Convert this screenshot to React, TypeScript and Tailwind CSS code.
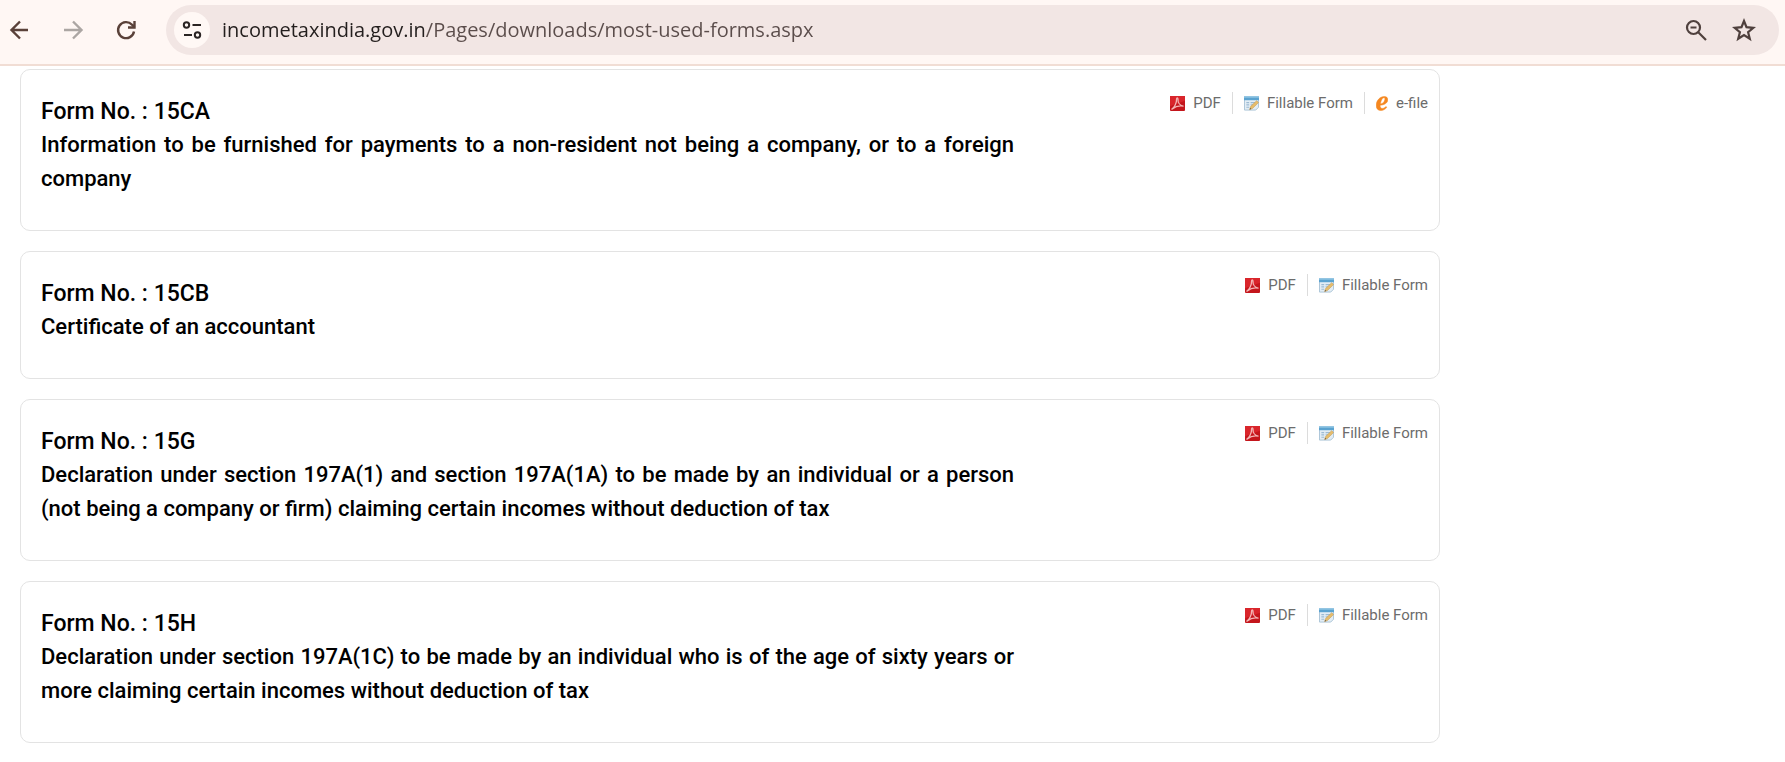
import { ReactNode } from 'react';

type LinkKind = 'pdf' | 'fillable' | 'efile';

interface FormEntry {
  no: string;
  title: string;
  links: LinkKind[];
}

const forms: FormEntry[] = [
  {
    no: '15CA',
    title:
      'Information to be furnished for payments to a non-resident not being a company, or to a foreign company',
    links: ['pdf', 'fillable', 'efile'],
  },
  { no: '15CB', title: 'Certificate of an accountant', links: ['pdf', 'fillable'] },
  {
    no: '15G',
    title:
      'Declaration under section 197A(1) and section 197A(1A) to be made by an individual or a person (not being a company or firm) claiming certain incomes without deduction of tax',
    links: ['pdf', 'fillable'],
  },
  {
    no: '15H',
    title:
      'Declaration under section 197A(1C) to be made by an individual who is of the age of sixty years or more claiming certain incomes without deduction of tax',
    links: ['pdf', 'fillable'],
  },
];

function PdfIcon() {
  return (
    <svg viewBox="0 0 16 16" className="w-[15px] h-[15px]" aria-hidden="true">
      <rect width="16" height="16" rx="1" fill="#c4161c" />
      <path d="M0 0h16v5L0 11z" fill="#d9252b" />
      <path
        d="M2 14c2.600-1.500 5.200-6.500 5-10.500C6.900 1.500 8.600 1.500 8.500 3.500c-.1 3.500 2 6.700 5.500 7.200-3.600-.7-8 .2-12 3.300z"
        fill="none"
        stroke="#f3b4b4"
        strokeWidth="1.400"
        strokeLinejoin="round"
      />
    </svg>
  );
}

function FillableIcon() {
  return (
    <svg viewBox="0 0 16 16" className="w-[15px] h-[15px]" aria-hidden="true">
      <path d="M.5 1.500h15V12l-3 3H.5z" fill="#e3edf5" stroke="#a9c3d6" />
      <path d="M0 .5h16v4H0z" fill="#5ba3d0" />
      <path d="M0 .5h16V2H0z" fill="#86bfe0" />
      <path d="M2.500 7h3M7 7h5M2.500 9.500h3M7 9.500h3M2.500 12h3" stroke="#9dbbd3" strokeWidth="1.200" />
      <path d="m6 14.500 1-3.200L13.500 5l2 2L9 13.300z" fill="#e6bd6c" stroke="#c79c52" strokeWidth=".6" />
      <path d="m6 14.500.5-1.700 1.200 1.100z" fill="#4b4b4b" />
    </svg>
  );
}

function EfileIcon() {
  return (
    <svg viewBox="0 0 12 15" className="w-3 h-[15px]" aria-hidden="true">
      <path
        fillRule="evenodd"
        d="M8.300.5C3.800.5.200 4.800.200 9.400c0 3.200 1.800 5.100 4.700 5.100 2.400 0 4.500-1.200 5.900-3.200l-.9-.8c-1 1.200-2.200 1.900-3.500 1.900-1.600 0-2.400-1-2.300-3.100C8.700 8.900 11.800 6.800 11.800 3.700 11.800 1.700 10.500.5 8.300.5zM4.400 8C4.900 4.800 6.300 1.800 7.900 1.800c.8 0 1.100.5 1 1.500C8.600 5.800 6.900 7.600 4.400 8z"
        fill="#f5871f"
        stroke="#f5871f"
        strokeWidth=".5"
      />
    </svg>
  );
}

const linkInfo: Record<LinkKind, { label: string; icon: ReactNode }> = {
  pdf: { label: 'PDF', icon: <PdfIcon /> },
  fillable: { label: 'Fillable Form', icon: <FillableIcon /> },
  efile: { label: 'e-file', icon: <EfileIcon /> },
};

function BrowserBar() {
  return (
    <header className="flex items-center h-[66px] pb-1 pl-2 pr-1.5 bg-[#fff7f4] border-b-2 border-[#f1ddd4]">
      <nav className="flex items-center gap-[29px] mr-7">
        <button type="button" aria-label="Back" className="text-[#5a4139]">
          <svg viewBox="0 0 24 24" className="w-6 h-6" fill="none" stroke="currentColor" strokeWidth="2.400">
            <path d="M20 12H4M12 3.500 3.500 12l8.500 8.500" />
          </svg>
        </button>
        <button type="button" aria-label="Forward" className="text-[#aca6a3]">
          <svg viewBox="0 0 24 24" className="w-6 h-6" fill="none" stroke="currentColor" strokeWidth="2.400">
            <path d="M3 12h17M12 3.500l8.500 8.500-8.500 8.500" />
          </svg>
        </button>
        <button type="button" aria-label="Reload" className="text-[#5a4139]">
          <svg viewBox="0 0 24 24" className="w-6 h-6" fill="none" stroke="currentColor" strokeWidth="2.400">
            <path d="M20 13.500a8 8 0 1 1-2-6.800l2.500 2.500" />
            <path d="M20.500 3v6.500H14" />
          </svg>
        </button>
      </nav>
      <div className="flex flex-1 items-center h-[50px] pl-2 pr-[23px] rounded-full bg-[#f2e6e4]">
        <button
          type="button"
          aria-label="View site information"
          className="flex items-center justify-center w-9 h-9 rounded-full bg-[#fff8f5] text-[#2a2423]"
        >
          <svg viewBox="0 0 20 20" className="w-5 h-5" fill="none" stroke="currentColor" strokeWidth="2">
            <circle cx="4.500" cy="5" r="2.700" />
            <path d="M10.500 5H19M2 15h8" />
            <circle cx="15.500" cy="15" r="2.700" />
          </svg>
        </button>
        <input
          type="text"
          aria-label="Address"
          defaultValue="incometaxindia.gov.in/Pages/downloads/most-used-forms.aspx"
          className="flex-1 min-w-0 ml-3 outline-none font-['Open_Sans',sans-serif] text-[20px] leading-7 text-transparent bg-clip-text bg-[linear-gradient(to_right,#231e1d_203px,#5a4c4a_203px)]"
        />
        <div className="flex items-center gap-6">
          <button type="button" aria-label="Zoom" className="text-[#4f403d]">
            <svg viewBox="0 0 24 24" className="w-6 h-6" fill="none" stroke="currentColor" strokeWidth="2.200">
              <circle cx="9.500" cy="9.500" r="6.500" />
              <path d="M6.500 9.500h6M14 14l8 8" />
            </svg>
          </button>
          <button type="button" aria-label="Bookmark this page" className="text-[#4f403d]">
            <svg viewBox="0 0 24 24" className="w-6 h-6" fill="none" stroke="currentColor" strokeWidth="2.200">
              <path d="m12 3 2.500 6.200 6.900.6-5.300 4.400 1.700 6.600-5.800-3.700-5.800 3.700 1.700-6.600-5.300-4.400 6.900-.6z" />
            </svg>
          </button>
        </div>
      </div>
    </header>
  );
}

function FormCard({ no, title, links }: FormEntry) {
  return (
    <article className="flex items-start justify-between pt-[22px] pb-[34px] pl-5 pr-[11px] bg-white border border-[#e3e3e3] rounded-[10px]">
      <div className="w-[71%] max-w-[973px] pt-1 text-black font-medium">
        <h2 className="text-[23px] leading-8">Form No. : {no}</h2>
        <p className="text-[22px] leading-[34px] text-justify">{title}</p>
      </div>
      <ul className="flex items-center text-[15px] leading-[22px] text-[#6c6c6c]">
        {links.map((kind) => (
          <li key={kind} className="pl-[11px] ml-[11px] border-l border-[#dcdcdc] first:border-l-0 first:ml-0">
            <a href={`#${no}-${kind}`} className="flex items-center gap-2">
              {linkInfo[kind].icon}
              {linkInfo[kind].label}
            </a>
          </li>
        ))}
      </ul>
    </article>
  );
}

export default function App() {
  return (
    <div className="min-h-screen bg-white font-[Roboto,sans-serif]">
      <BrowserBar />
      <main className="flex flex-col gap-5 max-w-[1440px] pt-[3px] pl-5">
        {forms.map((form) => (
          <FormCard key={form.no} {...form} />
        ))}
      </main>
    </div>
  );
}
